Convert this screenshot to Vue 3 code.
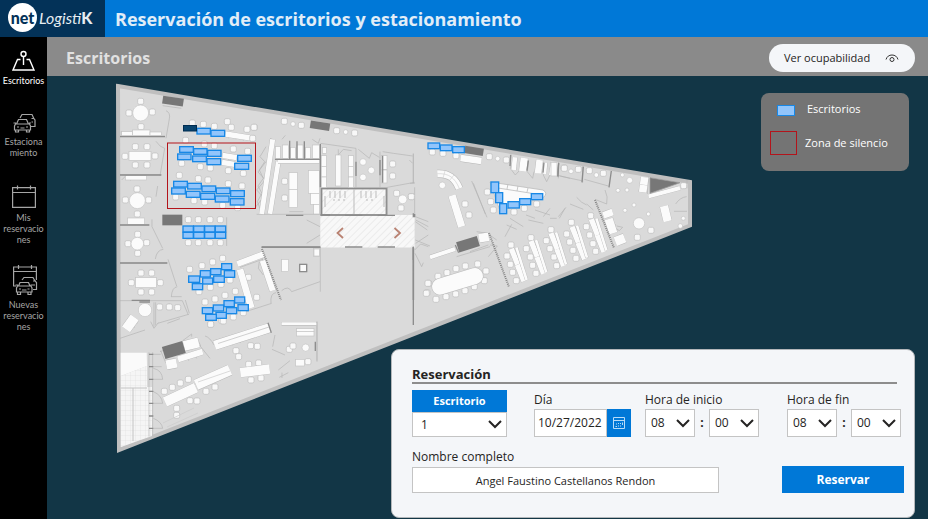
<script setup>
import { ref } from 'vue'

const desk = ref('1')
const date = ref('10/27/2022')
const startHour = ref('08')
const startMinute = ref('00')
const endHour = ref('08')
const endMinute = ref('00')
const fullName = ref('Angel Faustino Castellanos Rendon')

const hours = Array.from({ length: 24 }, (_, i) => String(i).padStart(2, '0'))
const minutes = ['00', '15', '30', '45']

const nav = [
  { id: 'desks', lines: ['Escritorios'], active: true },
  { id: 'parking', lines: ['Estaciona', 'miento'] },
  { id: 'mine', lines: ['Mis', 'reservacio', 'nes'] },
  { id: 'new', lines: ['Nuevas', 'reservacio', 'nes'] }
]

// Each section is drawn at three units per map unit, from its own origin.
// chairs: [cx, cy]   rounds: [cx, cy, r]   blocks: [x, y, w, h]
// beams and darks: [x1, y1, x2, y2, thickness]   desks: [x, y, w, h]
const sections = [
  {
    id: 'northwest', x: 110, y: 80,
    chairs: [[92, 64], [57, 99], [127, 96], [93, 140], [76, 200], [111, 200], [45, 229], [135, 228], [76, 255], [111, 255], [81, 327], [46, 360], [116, 360], [247, 129], [280, 133], [313, 139], [352, 125], [364, 142], [411, 148], [433, 142], [227, 181], [283, 192], [313, 197], [370, 207], [413, 214], [215, 250], [271, 260], [301, 264], [355, 272], [400, 280], [208, 286], [265, 296], [294, 300], [355, 311], [396, 318], [197, 351], [252, 362], [284, 366], [338, 376], [383, 383]],
    rounds: [[92, 99, 24], [82, 362, 24]],
    blocks: [[57, 214, 66, 27], [35, 155, 33, 12], [68, 150, 52, 17], [120, 156, 34, 10], [46, 287, 64, 13]],
    beams: [[346, 162, 434, 176, 16], [338, 226, 380, 233, 16], [336, 247, 374, 253, 16]],
    darks: [[158, 59, 220, 68, 24]],
    lines: 'M158 77L214 85M34 153V167M30 168H165M30 284H154M35 300L48 287L62 300L76 287L90 300M178 117L168 175M164 205L150 288M143 318L138 350M168 92Q182 98 178 117M138 184Q150 202 164 205M356 162V175M378 165V178M400 169V182M422 173V184M356 228V239M356 248V258M468 245L444 276L466 300L440 330L460 352L436 382M480 238L458 385',
    thick: 'M30 170H165M30 285H154',
    desks: [[260, 144, 41, 18], [302, 150, 42, 19], [208, 199, 42, 18], [250, 205, 41, 18], [292, 210, 41, 19], [202, 221, 41, 18], [247, 227, 42, 18], [290, 235, 42, 19], [382, 225, 42, 19], [373, 249, 43, 19], [190, 303, 42, 18], [232, 309, 42, 18], [275, 317, 42, 18], [318, 323, 42, 18], [361, 331, 42, 19], [184, 323, 42, 19], [228, 333, 42, 19], [271, 339, 43, 19], [315, 347, 42, 19], [360, 355, 42, 20]]
  },
  {
    id: 'west', x: 110, y: 200,
    chairs: [[235, 59], [265, 59], [300, 59], [331, 59], [235, 128], [265, 128], [300, 128], [331, 128], [239, 208], [276, 197], [308, 186], [338, 175], [360, 240], [333, 253], [301, 262], [267, 275], [285, 306], [315, 297], [345, 286], [376, 274], [400, 338], [370, 351], [336, 362], [302, 373], [83, 103], [110, 128], [54, 131], [83, 160], [82, 42], [93, 219], [125, 219], [64, 248], [151, 248], [93, 276], [125, 276], [149, 321], [178, 321], [203, 323]],
    rounds: [[82, 131, 19], [105, 330, 20]],
    blocks: [[53, 54, 51, 19], [77, 233, 62, 30]],
    beams: [[48, 388, 74, 352, 30]],
    darks: [[157, 60, 217, 60, 32]],
    lines: 'M30 75H118M30 189H172M30 302H217M126 58V80L158 145M174 178L200 258M183 290H215M217 302L235 345M226 300L238 340M132 307V380M137 307V376M143 370L236 343M136 177Q140 150 160 148M184 290Q186 262 202 260M350 52V138M122 365L132 385L145 368M44 372L74 382M52 362L82 370M178 311V321L168 328M178 321L188 328',
    thick: 'M30 75H118M30 189H172M65 301H120M88 306H120',
    desks: [[218, 77, 32, 19], [250, 77, 33, 19], [283, 77, 32, 19], [315, 77, 32, 19], [218, 96, 32, 19], [250, 96, 33, 19], [283, 96, 32, 19], [315, 96, 32, 19], [334, 190, 31, 19], [270, 211, 31, 20], [301, 205, 32, 19], [342, 211, 32, 21], [235, 227, 34, 20], [277, 233, 31, 19], [310, 227, 33, 20], [246, 250, 32, 19], [373, 290, 31, 19], [341, 301, 32, 19], [383, 313, 32, 19], [309, 314, 32, 19], [348, 322, 32, 19], [276, 322, 32, 19], [317, 336, 32, 19], [286, 342, 33, 19]]
  },
  {
    id: 'south', x: 110, y: 320,
    chairs: [[302, 13], [340, 3], [163, 214], [187, 202], [211, 189], [235, 178], [288, 214], [315, 201], [240, 242], [261, 243], [200, 265], [200, 286], [416, 133], [446, 129], [423, 180], [453, 174], [378, 92], [386, 110], [422, 77], [442, 79], [538, 88], [549, 78], [594, 125]],
    rounds: [[587, 83, 11]],
    blocks: [[560, 26, 52, 8], [560, 34, 52, 14], [557, 118, 26, 20]],
    beams: [[165, 246, 258, 203, 30], [258, 195, 360, 150, 32], [314, 76, 480, 23, 28], [169, 135, 200, 129, 28], [222, 78, 266, 67, 30], [204, 118, 278, 95, 18], [391, 158, 479, 147, 28], [515, 12, 620, 12, 8]],
    darks: [[161, 99, 222, 81, 38]],
    lines: 'M150 95L262 55L272 78M152 92L168 130M166 234L345 150M262 185L268 200L315 180L310 168M320 157L330 175L352 168M188 228L196 242M210 217L218 231M232 207L240 221M316 70L475 13M336 66L343 82M360 58L367 76M384 50L391 68M408 43L415 60M432 35L439 52M456 27L463 44M230 110L236 122M254 103L260 115M588 34V48M285 48Q300 52 312 75M268 75L300 115M245 50V42L218 62M30 55L105 30M172 10L210 -4M495 45L488 80M486 88L525 105M505 150L540 122M508 172L535 158M516 158V174M621 5V125M130 103H152M130 140H155M130 178H158M130 250H158M130 325H158M130 145Q156 150 158 178M130 215Q155 225 158 250M130 295Q155 305 158 325M117 97V350M128 97V345',
    thick: 'M117 103H130M117 140H130M117 178H130M117 214H130M117 250H130M117 288H130M117 325H130M474 8L484 38M616 65V93'
  },
  {
    id: 'core', x: 250, y: 110,
    chairs: [[12, 52], [8, 85], [103, 34], [154, 46], [260, 62], [314, 69], [104, 214], [104, 264], [428, 162], [428, 198], [440, 250], [484, 260], [453, 294]],
    rounds: [[129, 42, 7], [287, 66, 7], [339, 156, 10], [364, 181, 10], [339, 202, 10], [458, 268, 13]],
    blocks: [[76, 110, 15, 36], [97, 105, 19, 41], [122, 112, 14, 34], [141, 105, 18, 41], [167, 112, 14, 34], [187, 105, 21, 41], [117, 188, 25, 50], [117, 238, 25, 55], [175, 182, 33, 68], [182, 250, 26, 33], [191, 283, 17, 29], [214, 137, 15, 32], [214, 169, 15, 32], [214, 201, 15, 31], [257, 135, 16, 93], [296, 137, 15, 32], [296, 169, 15, 32], [296, 201, 15, 31], [217, 113, 13, 17], [394, 137, 17, 41], [394, 180, 17, 39], [191, 415, 17, 24]],
    beams: [[68, 88, 35, 312, 15], [85, 155, 60, 312, 14], [84, 155, 208, 155, 10]],
    darks: [[181, 43, 239, 52, 23]],
    lines: 'M75 148H211M175 150V160M211 100L318 115M318 115V232M390 125V232M490 130V218M398 125L430 130L488 138M412 232L494 217M20 313H211M35 412H211M265 118V135L280 118L305 122M325 118L358 145L365 128L388 142M48 110L30 140L44 155L28 180L40 205L24 228L36 250L22 275L32 300M60 85L72 90M96 88L106 76M187 88L205 100L210 85M494 232V320M412 232V315M170 330L210 350M170 400L210 375M497 330L535 350M497 400L535 375M478 150L488 160M118 305H160M494 420L512 402L535 410',
    thick: 'M75 148H211M119 92V146M141 94V146M163 94V146M211 102V232M318 155V198M390 150V196M108 316H160M211 315H240M285 316H337M383 316H435M285 411H337M383 411H435M35 412H211M490 412V450M494 312V322M398 137V218'
  },
  {
    id: 'northeast', x: 410, y: 130,
    chairs: [[4, 200], [67, 66], [99, 70], [138, 77], [238, 80], [289, 90], [462, 113], [165, 222], [177, 255], [232, 186], [242, 215], [250, 240], [312, 246], [343, 235], [380, 222], [56, 460], [84, 439], [111, 428], [138, 416], [166, 408], [203, 402], [228, 423], [223, 452], [193, 470], [165, 482], [137, 492], [108, 500], [78, 508], [51, 488], [303, 345], [291, 378], [301, 403], [308, 427], [319, 452], [363, 323], [349, 356], [361, 381], [368, 406], [378, 430], [423, 299], [409, 332], [420, 356], [432, 381], [440, 407]],
    rounds: [[263, 86, 7], [97, 166, 10]],
    blocks: [],
    beams: [[152, 84, 214, 93, 20], [315, 82, 311, 120, 14], [343, 84, 338, 124, 22], [389, 90, 384, 130, 20], [407, 98, 404, 132, 10], [434, 97, 428, 137, 22], [126, 196, 155, 290, 22], [60, 382, 135, 357, 12], [207, 325, 236, 320, 26], [304, 356, 324, 406, 16], [322, 404, 342, 454, 16], [319, 352, 350, 450, 8], [363, 333, 383, 383, 16], [381, 381, 401, 431, 16], [378, 330, 409, 427, 8], [423, 310, 443, 360, 16], [441, 358, 461, 408, 16], [438, 307, 468, 403, 8]],
    darks: [[164, 58, 220, 67, 22], [143, 352, 205, 333, 32]],
    lines: 'M185 153L231 262M190 160L226 252M155 82L212 92M172 78V92M194 82V95M303 72L301 115L316 135L330 120M356 90L352 125L368 145L372 125M402 100L400 135L410 155L420 135M330 92L355 95M10 72V160M0 160H14M16 260L55 275M16 330L60 348M16 275L52 300M305 283L285 320M290 285L320 298M300 265L340 290M348 255L375 265M355 270L400 280M375 240L420 255M400 260L420 235M465 235L448 265M440 135L480 145M140 380L240 350M180 365L235 345M200 305L232 310L260 330M240 345L262 348L235 380M12 355V510M15 370L35 410L40 398',
    thick: 'M10 250V262M10 350V510M136 345L146 368M302 75L300 108M355 92L351 122M402 98L399 128M446 98L442 138',
    desks: [[53, 38, 36, 18], [90, 44, 36, 18], [127, 49, 36, 19], [242, 155, 24, 33], [256, 187, 22, 31], [268, 220, 22, 31], [293, 214, 35, 20], [328, 205, 34, 19], [363, 190, 35, 19]]
  },
  {
    id: 'east', x: 550, y: 150,
    chairs: [[43, 55], [85, 58], [118, 62], [160, 70], [64, 217], [50, 252], [59, 276], [69, 301], [78, 325], [122, 197], [109, 230], [119, 255], [129, 281], [137, 304], [303, 241], [262, 262], [401, 107]],
    rounds: [[63, 64, 7], [139, 75, 7], [217, 75, 6], [239, 91, 9], [204, 121, 6], [231, 120, 6], [252, 165, 6], [225, 181, 6], [295, 192, 6], [400, 205, 6], [391, 228, 7], [267, 220, 17]],
    blocks: [[3, 38, 18, 40]],
    beams: [[66, 230, 86, 280, 16], [84, 278, 104, 328, 16], [81, 227, 111, 323, 8], [124, 208, 144, 258, 16], [142, 256, 162, 306, 16], [139, 205, 169, 301, 8], [284, 82, 281, 104, 23], [281, 105, 278, 127, 23], [296, 139, 390, 114, 12], [342, 168, 353, 214, 25], [160, 196, 188, 186, 20], [176, 207, 190, 250, 25], [196, 275, 224, 264, 28]],
    darks: [],
    lines: 'M25 40V85M98 50V97M29 78L95 92M103 88L175 108M372 184H411M377 162Q390 142 410 140M135 148L170 162Q175 140 165 120M60 162L100 178M25 200L48 172M80 142Q95 160 110 165M130 180L110 162M0 205H20M296 80L292 132M170 212L184 250M182 225H198M187 240H203M234 88L245 94M411 90V115M200 228L218 232L208 242L198 235',
    thick: 'M184 63L177 112M100 50L96 97M26 40L24 80'
  },
  {
    id: 'meeting', x: 240, y: 240,
    chairs: [[25, 112], [50, 172], [564, 130], [559, 160]],
    rounds: [],
    blocks: [[125, 58, 21, 37], [179, 73, 21, 22], [222, 27, 16, 21]],
    beams: [[-8, 72, 72, 42, 18], [68, 62, 98, 152, 18], [0, 88, 34, 204, 20], [125, 251, 228, 251, 8]],
    darks: [],
    lines: 'M65 21H241M241 21V155M0 82L68 58M65 50L92 152M20 214L95 190M93 190Q90 160 108 158M155 155L240 125M125 152Q145 135 155 155M231 245V362M179 73H200V95H179ZM0 64L24 64L30 56M58 65L55 85L70 105',
    thick: 'M65 21H241M520 20V255M179 73H200V95H179Z'
  }
]

const dashedWalls = ['M489 233L509 287', 'M595 200L614 248', 'M262 249L281 300']
</script>

<template>
  <div class="app">
    <header class="top">
      <a class="logo" href="#" aria-label="netLogistiK">
        <span class="logo-net">net</span>
        <span class="logo-name">Logisti<b>K</b></span>
      </a>
      <h1>Reservación de escritorios y estacionamiento</h1>
    </header>

    <div class="body">
      <nav class="side">
        <a v-for="item in nav" :key="item.id" href="#" class="nav-item" :class="{ active: item.active }">
          <svg v-if="item.id === 'desks'" class="icon" width="24" height="24" viewBox="0 0 24 24" fill="none" stroke="currentColor" stroke-width="1.4">
            <circle cx="11.5" cy="6" r="2.5" />
            <path d="M11.5 8.5V17M8.500 11.500H5.500L1 22H22L17.500 11.500H14.500" />
          </svg>
          <svg v-else-if="item.id === 'parking'" class="icon" width="24" height="24" viewBox="0 0 24 24" fill="none" stroke="currentColor" stroke-width="1.2">
            <path d="M8 9L10 5.500H20L21.800 9.500L23 11V17.500H19M19.500 9.500H22.500M19.500 13H21" />
            <path d="M4.500 15L6.500 10.500H14.500L16.500 15M1.500 14H4M17 14H19M3.500 15H17.500L18.500 17V21H2.500V17ZM3.500 21V23H6.500V21M14.500 21V23H17.500V21M5 18H7M14 18H16M8.500 19H12.500" />
          </svg>
          <svg v-else-if="item.id === 'mine'" class="icon" width="26" height="24" viewBox="0 0 26 24" fill="none" stroke="currentColor" stroke-width="1.2">
            <path d="M1.600 2.600H24.400V22.400H1.600ZM1.600 7.500H24.400M6.500 .5V4.500M19.500 .5V4.500" />
          </svg>
          <svg v-else class="icon" width="28" height="32" viewBox="0 0 28 32" fill="none" stroke="currentColor" stroke-width="1.2">
            <path d="M6 22H3.600V3H26.400V16M3.600 7.500H26.400M8.500 1V5M21.500 1V5" />
            <path d="M12 16L14 13.500H23L25 17L26.500 18.500V25.500H23M23 17H26M23 21H25M8.500 22L10 18.500H18.500L20 22M5.500 21H8M20.500 21H23M7.500 22H21L22 24V28H6.500V24ZM7.500 28V30.500H10.500V28M18 28V30.500H21V28M9 25H11M17.500 25H19.500M12 26H16.500" />
          </svg>
          <span class="nav-label"><span v-for="line in item.lines" :key="line">{{ line }}</span></span>
        </a>
      </nav>

      <section class="content">
        <div class="bar">
          <h2>Escritorios</h2>
          <button class="pill" type="button">
            Ver ocupabilidad
            <svg width="14" height="10" viewBox="0 0 14 10" fill="none" stroke="#333" stroke-width="1">
              <path d="M1 6.500Q2.500 2 7 2T13 6.500" />
              <circle cx="7" cy="6.500" r="2" />
            </svg>
          </button>
        </div>

        <main class="stage">
          <svg class="plan" viewBox="47 76 881 443" role="img" aria-label="Plano de escritorios">
            <defs>
              <pattern id="hatch" width="5" height="5" patternUnits="userSpaceOnUse" patternTransform="rotate(45)">
                <rect width="5" height="5" fill="#f8f8f8" />
                <path d="M0 0V5" stroke="#dedede" stroke-width="1" />
              </pattern>
              <pattern id="tiles" width="5" height="5" patternUnits="userSpaceOnUse">
                <rect width="5" height="5" fill="#f5f5f5" />
                <path d="M0 0H5M0 0V5" stroke="#dcdcdc" stroke-width=".6" />
              </pattern>
            </defs>

            <path class="floor" d="M118 86L690 182V225.500L119 450Z" />
            <path d="M120.700 352.700H146.700L147 366L120.700 376Z" fill="#fafafa" />
            <path d="M120.700 376L147 366V387H152V436L120.700 447Z" fill="url(#tiles)" />
            <path d="M120.700 388H147M133 388V441" stroke="#c4c4c4" fill="none" />
            <rect x="320.300" y="215" width="94.300" height="32.500" fill="url(#hatch)" />
            <rect x="321.500" y="188.500" width="65" height="26.500" fill="url(#hatch)" stroke="#8b8b8b" stroke-width="1.8" />
            <path d="M354 189V214M325 196V207M384 196V207M330 191V198M335 191V198M340 191V198M345 191V198M361 191V198M366 191V198M371 191V198M376 191V198M334 199V201M339 199V201M344 199V201M367 199V201M372 199V201" stroke="#bbb" fill="none" />
            <path d="M437.300 173.700C449 173 455 178 459.300 188.500" fill="none" stroke="#b5b5b5" stroke-width="8" />
            <path d="M437.300 173.700C449 173 455 178 459.300 188.500" fill="none" stroke="#fbfbfb" stroke-width="7" />
            <path d="M437.300 173.700C449 173 455 178 459.300 188.500M445 171L443 178M454 175L449 181" fill="none" stroke="#ccc" stroke-width=".6" />
            <path d="M490 182L543 190Q548 193 544 197L500 211Z" fill="#fbfbfb" stroke="#bbb" stroke-width=".8" />
            <path d="M498 188L536 194M508 184L507 189M518 186L517 191M528 188L527 192" stroke="#bbb" fill="none" stroke-width=".8" />

            <g v-for="s in sections" :key="s.id" :transform="`translate(${s.x} ${s.y}) scale(.3333)`">
              <path class="thin" :d="s.lines" />
              <rect v-for="(c, i) in s.chairs" :key="'c' + i" class="chair" :x="c[0] - 9" :y="c[1] - 9" width="18" height="18" rx="5" />
              <template v-for="(b, i) in s.beams" :key="'m' + i">
                <path class="beam-edge" :d="`M${b[0]} ${b[1]}L${b[2]} ${b[3]}`" :stroke-width="b[4] + 2" />
                <path class="beam" :d="`M${b[0]} ${b[1]}L${b[2]} ${b[3]}`" :stroke-width="b[4]" />
              </template>
              <rect v-for="(b, i) in s.blocks" :key="'b' + i" class="block" :x="b[0]" :y="b[1]" :width="b[2]" :height="b[3]" />
              <circle v-for="(r, i) in s.rounds" :key="'r' + i" class="block" :cx="r[0]" :cy="r[1]" :r="r[2]" />
              <path v-for="(d, i) in s.darks" :key="'d' + i" class="dark" :d="`M${d[0]} ${d[1]}L${d[2]} ${d[3]}`" :stroke-width="d[4]" />
              <path class="thick" :d="s.thick" />
            </g>

            <path d="M162 290M163 423L194 408M167 427L198 413M198 382L230 371" stroke="#ccc" stroke-width=".7" fill="none" />
            <path d="M218 343.500L269 327" stroke="#c4c4c4" stroke-width=".8" fill="none" />
            <path d="M440 286.700L475 276" stroke="#bbb" stroke-width="17" stroke-linecap="round" />
            <path d="M440 286.700L475 276" stroke="#fbfbfb" stroke-width="16" stroke-linecap="round" />
            <path d="M650 177.700L680 182.700L650 193.300Z" fill="#777" stroke="#999" stroke-width=".8" />
            <path v-for="w in dashedWalls" :key="w" class="wall-dash" :d="w" />
            <path d="M343 228L337.500 233L343 238M394.500 228L400 233L394.500 238" fill="none" stroke="#b98272" stroke-width="1.8" />

            <rect class="quiet" x="167.500" y="143" width="88" height="65.500" />
            <g v-for="s in sections" :key="'k' + s.id" :transform="`translate(${s.x} ${s.y}) scale(.3333)`">
              <rect v-for="(d, i) in s.desks" :key="i" class="desk" :x="d[0] + 1" :y="d[1] + 1" :width="d[2] - 1" :height="d[3] - 1" />
            </g>
            <rect x="183.500" y="125.500" width="13" height="5.500" fill="#094570" stroke="#002c50" />
          </svg>

          <aside class="legend">
            <span class="key-desk"></span><span class="key-text first">Escritorios</span>
            <span class="key-zone"></span><span class="key-text">Zona de silencio</span>
          </aside>

          <form class="panel" @submit.prevent>
            <h3>Reservación</h3>
            <div class="fields">
              <div class="desk-field">
                <label for="desk">Escritorio</label>
                <span class="pick">
                  <select id="desk" v-model="desk">
                    <option v-for="n in 60" :key="n">{{ n }}</option>
                  </select>
                  <svg class="chev" width="14" height="9" viewBox="0 0 14 9"><path d="M1 1L7 7L13 1" /></svg>
                </span>
              </div>

              <div class="field">
                <label for="date">Día</label>
                <span class="date">
                  <input id="date" v-model="date" type="text">
                  <button type="button" aria-label="Abrir calendario">
                    <svg width="12" height="12" viewBox="0 0 12 12" fill="none" stroke="#b9dcf8" stroke-width="1">
                      <path d="M.5 .5H11.500V11.500H.5ZM.5 3.500H11.500M2.500 9.500H4M5.500 6V7M5.500 8.500V9.500M7.500 6V7M7.500 8.500V9.500M9.500 5.500V8M3 7H4" />
                    </svg>
                  </button>
                </span>
              </div>

              <div class="field">
                <label for="start-hour">Hora de inicio</label>
                <span class="time">
                  <span class="pick">
                    <select id="start-hour" v-model="startHour"><option v-for="h in hours" :key="h">{{ h }}</option></select>
                    <svg class="chev" width="14" height="9" viewBox="0 0 14 9"><path d="M1 1L7 7L13 1" /></svg>
                  </span>
                  <b>:</b>
                  <span class="pick">
                    <select v-model="startMinute" aria-label="Minuto de inicio"><option v-for="m in minutes" :key="m">{{ m }}</option></select>
                    <svg class="chev" width="14" height="9" viewBox="0 0 14 9"><path d="M1 1L7 7L13 1" /></svg>
                  </span>
                </span>
              </div>

              <div class="field">
                <label for="end-hour">Hora de fin</label>
                <span class="time">
                  <span class="pick">
                    <select id="end-hour" v-model="endHour"><option v-for="h in hours" :key="h">{{ h }}</option></select>
                    <svg class="chev" width="14" height="9" viewBox="0 0 14 9"><path d="M1 1L7 7L13 1" /></svg>
                  </span>
                  <b>:</b>
                  <span class="pick">
                    <select v-model="endMinute" aria-label="Minuto de fin"><option v-for="m in minutes" :key="m">{{ m }}</option></select>
                    <svg class="chev" width="14" height="9" viewBox="0 0 14 9"><path d="M1 1L7 7L13 1" /></svg>
                  </span>
                </span>
              </div>
            </div>

            <div class="bottom">
              <div class="name">
                <label for="name">Nombre completo</label>
                <input id="name" v-model="fullName" type="text">
              </div>
              <button class="submit" type="submit">Reservar</button>
            </div>
          </form>
        </main>
      </section>
    </div>
  </div>
</template>

<style>
body {
  background: #123646;
}
</style>

<style scoped>
.app,
.app * {
  box-sizing: border-box;
}

.app {
  display: flex;
  flex-direction: column;
  min-height: 100vh;
  font-family: "Open Sans", "Noto Sans", sans-serif;
  font-size: 12px;
  line-height: 16px;
  color: #252423;
}

h1,
h2,
h3 {
  margin: 0;
  font-weight: 700;
}

input,
select,
button {
  margin: 0;
  font: inherit;
  color: inherit;
  border-radius: 0;
}

.top {
  display: flex;
  align-items: center;
  height: 37px;
  background: #0078d7;
  color: #e1edf7;
}

.top h1 {
  padding-left: 10px;
  font-size: 18px;
  line-height: 24px;
}

.logo {
  display: flex;
  align-items: center;
  gap: 2px;
  width: 105px;
  height: 37px;
  padding: 0 0 2px 8px;
  background: #033258;
  color: #e6edf2;
  text-decoration: none;
  font-family: Lato, sans-serif;
  font-size: 16px;
}

.logo-net {
  display: grid;
  place-content: center;
  width: 29px;
  height: 29px;
  border-radius: 50%;
  background: #fff;
  color: #033258;
  font-weight: 900;
}

.logo-name {
  font-style: italic;
}

.logo-name b {
  font-weight: 900;
  font-style: normal;
}

.body {
  display: flex;
  flex: 1;
}

.side {
  display: grid;
  grid-template-rows: 61px 76px 79px auto;
  align-content: start;
  width: 47px;
  padding-top: 11px;
  background: #000;
}

.nav-item {
  display: flex;
  flex-direction: column;
  align-items: center;
  gap: 3px;
  color: #a6a6a6;
  text-decoration: none;
  font-family: Lato, sans-serif;
  font-size: 9px;
  line-height: 11px;
}

.nav-item.active {
  color: #fff;
}

.nav-label {
  display: flex;
  flex-direction: column;
  align-items: center;
}

.content {
  display: flex;
  flex: 1;
  flex-direction: column;
  min-width: 0;
}

.bar {
  display: flex;
  align-items: center;
  justify-content: space-between;
  height: 39px;
  padding: 0 13px 0 19px;
  background: #8a8a8a;
}

.bar h2 {
  padding-top: 2px;
  color: #e1e1e1;
  font-size: 16px;
  line-height: 24px;
}

.pill {
  display: flex;
  align-items: center;
  justify-content: space-between;
  width: 146px;
  height: 28px;
  margin-top: 3px;
  padding: 0 16px 0 15px;
  border: 0;
  border-radius: 14px;
  background: #f4f6f9;
  font-size: 11px;
}

.stage {
  display: grid;
  flex: 1;
  background: #123646;
}

.stage > * {
  grid-area: 1 / 1;
}

.plan {
  display: block;
  width: 100%;
}

.floor {
  fill: #dadada;
  stroke: #bfbfbf;
  stroke-width: 4;
}

.thin {
  fill: none;
  stroke: #b4b4b4;
  stroke-width: 2;
}

.thick {
  fill: none;
  stroke: #8c8c8c;
  stroke-width: 4;
}

.chair {
  fill: #f8f8f8;
  stroke: #bdbdbd;
  stroke-width: 2;
}

.block {
  fill: #fbfbfb;
  stroke: #c4c4c4;
  stroke-width: 2;
}

.beam-edge {
  fill: none;
  stroke: #b4b4b4;
}

.beam {
  fill: none;
  stroke: #fbfbfb;
}

.dark {
  fill: none;
  stroke: #777;
}

.wall-dash {
  fill: none;
  stroke: #858585;
  stroke-width: 2;
  stroke-dasharray: 1 1;
}

.quiet {
  fill: none;
  stroke: #b3141b;
}

.desk {
  fill: #92c5fb;
  stroke: #1888e6;
  stroke-width: 4;
}

.legend {
  display: grid;
  grid-template-columns: 27px auto;
  align-content: start;
  align-items: center;
  justify-items: center;
  justify-content: start;
  column-gap: 8px;
  row-gap: 14px;
  justify-self: end;
  align-self: start;
  width: 148px;
  height: 78px;
  margin: 17px 19px 0 0;
  padding: 8px 0 0 9px;
  border-radius: 8px;
  background: #747474;
  color: #fff;
  font-size: 11px;
}

.key-text {
  justify-self: start;
}

.key-text.first {
  padding-left: 2px;
}

.key-desk {
  width: 18px;
  height: 11px;
  margin: 3px 0 0 4px;
  border: 1px solid #1888e6;
  background: #92c5fb;
}

.key-zone {
  width: 27px;
  height: 24px;
  border: 1px solid #b3141b;
}

.panel {
  justify-self: end;
  align-self: end;
  width: 524px;
  margin: 0 13px 1px 0;
  padding: 16px 10px 24px 20px;
  border: 1px solid #b3b7ba;
  border-radius: 8px;
  background: #f4f6f9;
}

.panel h3 {
  margin-right: 7px;
  border-bottom: 2px solid #8d8d8d;
  font-size: 13px;
  line-height: 16px;
}

.fields {
  display: grid;
  grid-template-columns: 122px 111px 142px auto;
  justify-content: start;
  padding-top: 6px;
}

.desk-field {
  display: flex;
  flex-direction: column;
  width: 95px;
}

.desk-field label {
  height: 22px;
  background: #0078d7;
  color: #fff;
  font-size: 11px;
  font-weight: 700;
  line-height: 22px;
  text-align: center;
}

.pick {
  display: grid;
  align-items: center;
}

.pick > * {
  grid-area: 1 / 1;
}

.pick select {
  width: 100%;
  height: 28px;
  padding: 0 5px;
  border: 1px solid #c4c4c4;
  background: #fff;
  appearance: none;
}

.desk-field .pick select {
  height: 25px;
  padding-left: 8px;
}

.chev {
  justify-self: end;
  margin-right: 5px;
  pointer-events: none;
  fill: none;
  stroke: #252423;
  stroke-width: 2;
}

.field {
  display: flex;
  flex-direction: column;
  gap: 1px;
  padding-top: 2px;
}

.date {
  display: flex;
  width: 97px;
  height: 28px;
}

.date input {
  width: 73px;
  padding: 0 0 0 3px;
  border: 1px solid #c4c4c4;
  background: #fff;
}

.date button {
  display: grid;
  flex: 1;
  place-content: center;
  padding: 0;
  border: 0;
  background: #0078d7;
}

.time {
  display: grid;
  grid-template-columns: 50px 14px 50px;
  align-items: center;
}

.time b {
  text-align: center;
}

.bottom {
  display: flex;
  align-items: flex-end;
  justify-content: space-between;
  padding-top: 12px;
}

.name {
  display: flex;
  flex-direction: column;
  gap: 2px;
  width: 307px;
}

.name input {
  height: 26px;
  border: 1px solid #c4c4c4;
  background: #fff;
  font-size: 11px;
  text-align: center;
}

.submit {
  width: 122px;
  height: 27px;
  padding: 0;
  border: 0;
  background: #0078d7;
  color: #fff;
  font-weight: 700;
}
</style>
